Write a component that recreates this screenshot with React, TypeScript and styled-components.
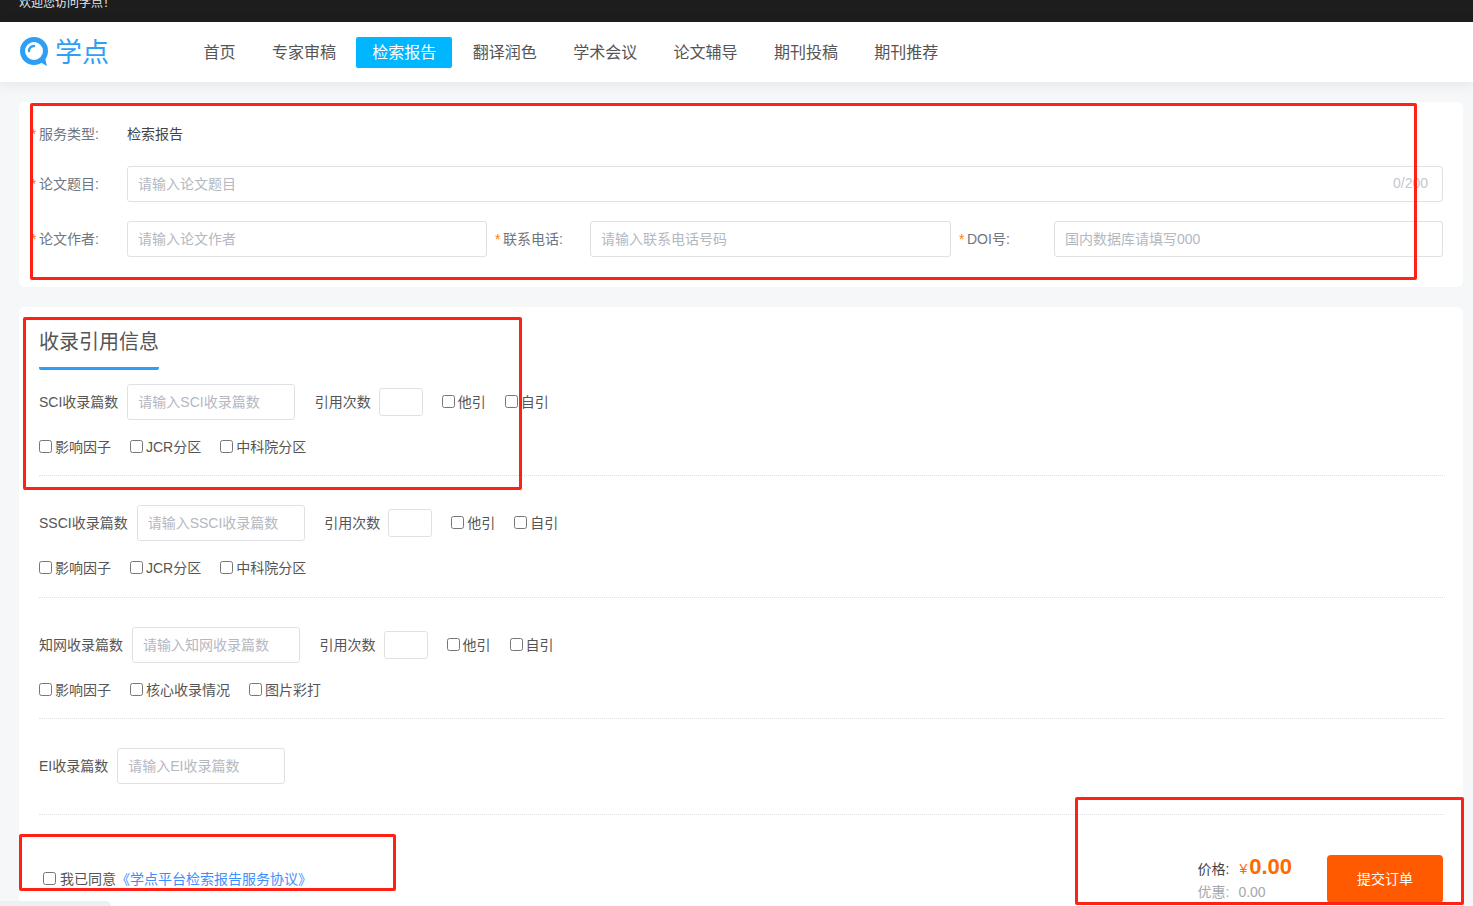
import React from 'react';
import styled, { createGlobalStyle } from 'styled-components';

const FONT = '"Liberation Sans", "Noto Sans CJK SC", sans-serif';

const GlobalStyle = createGlobalStyle`
  html, body {
    margin: 0;
    padding: 0;
    height: 906px;
    overflow: hidden;
    background: #f6f7f9;
    font-family: ${FONT};
    font-size: 14px;
    color: #555;
  }
  * { box-sizing: border-box; }
`;

const Page = styled.div`
  position: relative;
  width: 1473px;
  height: 906px;
  overflow: hidden;
`;

const TopBar = styled.div`
  height: 22px;
  background: #1d1d1d;
  color: #e8e8e8;
  font-size: 12px;
  line-height: 7px;
  padding-left: 19px;
  overflow: hidden;
`;

const Header = styled.header`
  position: relative;
  height: 60px;
  background: #fff;
  box-shadow: 0 2px 12px rgba(60, 70, 90, 0.1);
  display: flex;
  align-items: center;
  padding-left: 20px;
`;

const LogoBox = styled.div`
  width: 167.5px;
  display: flex;
  align-items: center;
  gap: 7px;
  color: #2f9ff5;
  font-size: 27px;
  line-height: 30px;
  span { padding-top: 2px; }
`;

const Nav = styled.nav`
  display: flex;
  gap: 4.4px;
`;

const NavItem = styled.a<{ $active?: boolean }>`
  height: 31px;
  line-height: 31px;
  padding: 0 16px;
  border-radius: 2px;
  font-size: 16px;
  color: ${p => (p.$active ? '#fff' : '#555')};
  background: ${p => (p.$active ? '#00b7ff' : 'transparent')};
`;

const Main = styled.main`
  padding: 20px 10px 0 19px;
  display: flex;
  flex-direction: column;
  gap: 20px;
`;

const Card = styled.section`
  background: #fff;
  border-radius: 6px;
`;

const ServiceCard = styled(Card)`
  padding: 20px 20px 30px 12px;
  display: flex;
  flex-direction: column;
  gap: 19px;
`;

const InfoRow = styled.div`
  display: grid;
  grid-template-columns: 96px 1fr;
  align-items: center;
  height: 25px;
  padding-bottom: 2px;
`;

const FieldRow = styled.div`
  display: grid;
  grid-template-columns: 96px 1fr;
  align-items: center;
`;

const AuthorRow = styled.div`
  display: grid;
  grid-template-columns: 88px 360px 87px 361px 87px 1fr;
  column-gap: 8px;
  align-items: center;
`;

const ReqLabel = styled.label`
  padding-bottom: 2px;
  color: #6f7680;
  white-space: nowrap;
  &::before {
    content: '*';
    display: inline-block;
    width: 8px;
    color: #ff7a1a;
    font-size: 14px;
  }
`;

const ServiceValue = styled.span`
  padding-bottom: 2px;
  color: #444;
`;

const InputWrap = styled.div`
  position: relative;
`;

const TextInput = styled.input<{ $width?: number }>`
  display: block;
  width: ${p => (p.$width ? `${p.$width}px` : '100%')};
  height: 36px;
  padding: 0 10px;
  border: 1px solid #dfe1e6;
  border-radius: 3px;
  outline: none;
  background: #fff;
  color: #555;
  font-family: ${FONT};
  font-size: 14px;
  &::placeholder { color: #b4b8bf; opacity: 1; }
`;

const Counter = styled.span`
  position: absolute;
  right: 15px;
  top: 9px;
  color: #c4c7cc;
`;

const QuoteCard = styled(Card)`
  padding: 0 18px 0 20px;
  height: 640px;
`;

const Title = styled.h2`
  display: inline-block;
  margin: 22px 0 14px;
  padding-bottom: 11px;
  border-bottom: 3px solid #2f9ff5;
  border-radius: 0 0 2px 2px;
  color: #555;
  font-size: 20px;
  font-weight: 400;
  line-height: 27px;
`;

const Block = styled.div<{ $first?: boolean; $bottom: number }>`
  padding-top: ${p => (p.$first ? 0 : 29)}px;
  padding-bottom: ${p => p.$bottom}px;
  border-bottom: 1px dotted #dcdfe4;
  display: flex;
  flex-direction: column;
  gap: 9px;
`;

const Line = styled.div`
  display: flex;
  align-items: center;
  gap: 19px;
  height: 36px;
  white-space: nowrap;
`;

const SourceField = styled.div`
  display: flex;
  align-items: center;
  gap: 9px;
  margin-right: 0.5px;
  span { padding-bottom: 2px; }
`;

const CountField = styled.div`
  display: flex;
  align-items: center;
  gap: 8px;
  span { padding-bottom: 2px; }
`;

const SmallInput = styled(TextInput)`
  width: 44px;
  height: 28px;
  padding: 0 4px;
`;

const Check = styled.label`
  display: inline-flex;
  align-items: center;
  gap: 3px;
  padding-bottom: 2px;
`;

const Box = styled.input.attrs({ type: 'checkbox' })`
  width: 13px;
  height: 13px;
  margin: 0;
`;

const Footer = styled.div`
  display: flex;
  align-items: center;
  justify-content: space-between;
  padding: 39px 2px 0 4px;
`;

const Agree = styled.label`
  display: flex;
  align-items: center;
  padding-bottom: 2px;
  ${Box} { margin-right: 4px; }
`;

const AgreeLink = styled.a`
  color: #3d8fff;
`;

const Checkout = styled.div`
  display: flex;
  align-items: center;
  gap: 35px;
`;

const PriceBlock = styled.div`
  display: flex;
  flex-direction: column;
  margin-bottom: 3px;
`;

const PriceLine = styled.div`
  display: flex;
  align-items: baseline;
  height: 29px;
  color: #444;
`;

const Yen = styled.span`
  margin: 0 2px 0 10px;
  color: #ff6a00;
`;

const Amount = styled.span`
  color: #ff6a00;
  font-size: 22px;
  font-weight: 700;
`;

const DiscountLine = styled.div`
  display: flex;
  gap: 9px;
  height: 18px;
  line-height: 18px;
  color: #a5a8ae;
`;

const SubmitButton = styled.button`
  width: 116px;
  height: 48px;
  padding: 0 0 2px;
  border: none;
  border-radius: 4px;
  background: #ff5a00;
  color: #fff;
  font-family: ${FONT};
  font-size: 14px;
`;

const Annotation = styled.div<{ $x: number; $y: number; $w: number; $h: number }>`
  position: absolute;
  left: ${p => p.$x}px;
  top: ${p => p.$y}px;
  width: ${p => p.$w}px;
  height: ${p => p.$h}px;
  border: 3px solid #ff2116;
  border-radius: 2px;
  pointer-events: none;
`;

const BottomTab = styled.div`
  position: absolute;
  left: 0;
  bottom: 0;
  width: 111px;
  height: 5px;
  background: #eeeff1;
  border-radius: 0 6px 0 0;
`;

const LogoMark = () => (
  <svg width="28" height="30" viewBox="0 0 28 30" fill="none">
    <circle cx="14" cy="14" r="11.5" stroke="#2f9ff5" strokeWidth="5" />
    <path d="M9 14a5 5 0 0 1 5-5" stroke="#2f9ff5" strokeWidth="2.4" strokeLinecap="round" />
    <path d="M18 24l7-3 2 8z" fill="#2f9ff5" />
  </svg>
);

const navItems = ['首页', '专家审稿', '检索报告', '翻译润色', '学术会议', '论文辅导', '期刊投稿', '期刊推荐'];

interface SourceProps {
  label: string;
  extras?: string[];
  noCount?: boolean;
  first?: boolean;
  bottom: number;
}

const Source: React.FC<SourceProps> = ({ label, extras, noCount, first, bottom }) => (
  <Block $first={first} $bottom={bottom}>
    <Line>
      <SourceField>
        <span>{label}收录篇数</span>
        <TextInput $width={168} placeholder={`请输入${label}收录篇数`} />
      </SourceField>
      {!noCount && (
        <>
          <CountField>
            <span>引用次数</span>
            <SmallInput />
          </CountField>
          <Check><Box />他引</Check>
          <Check><Box />自引</Check>
        </>
      )}
    </Line>
    {extras && (
      <Line>
        {extras.map(item => (
          <Check key={item}><Box />{item}</Check>
        ))}
      </Line>
    )}
  </Block>
);

export default function App() {
  return (
    <Page>
      <GlobalStyle />
      <TopBar>欢迎您访问学点！</TopBar>
      <Header>
        <LogoBox>
          <LogoMark />
          <span>学点</span>
        </LogoBox>
        <Nav>
          {navItems.map(item => (
            <NavItem key={item} $active={item === '检索报告'}>{item}</NavItem>
          ))}
        </Nav>
      </Header>

      <Main>
        <ServiceCard>
          <InfoRow>
            <ReqLabel>服务类型:</ReqLabel>
            <ServiceValue>检索报告</ServiceValue>
          </InfoRow>
          <FieldRow>
            <ReqLabel>论文题目:</ReqLabel>
            <InputWrap>
              <TextInput placeholder="请输入论文题目" />
              <Counter>0/200</Counter>
            </InputWrap>
          </FieldRow>
          <AuthorRow>
            <ReqLabel>论文作者:</ReqLabel>
            <TextInput placeholder="请输入论文作者" />
            <ReqLabel>联系电话:</ReqLabel>
            <TextInput placeholder="请输入联系电话号码" />
            <ReqLabel>DOI号:</ReqLabel>
            <TextInput placeholder="国内数据库请填写000" />
          </AuthorRow>
        </ServiceCard>

        <QuoteCard>
          <Title>收录引用信息</Title>
          <Source first bottom={10} label="SCI" extras={['影响因子', 'JCR分区', '中科院分区']} />
          <Source bottom={11} label="SSCI" extras={['影响因子', 'JCR分区', '中科院分区']} />
          <Source bottom={10} label="知网" extras={['影响因子', '核心收录情况', '图片彩打']} />
          <Source bottom={30} noCount label="EI" />
          <Footer>
            <Agree>
              <Box />
              <span>我已同意</span>
              <AgreeLink>《学点平台检索报告服务协议》</AgreeLink>
            </Agree>
            <Checkout>
              <PriceBlock>
                <PriceLine>
                  价格:<Yen>¥</Yen><Amount>0.00</Amount>
                </PriceLine>
                <DiscountLine>
                  <span>优惠:</span>
                  <span>0.00</span>
                </DiscountLine>
              </PriceBlock>
              <SubmitButton>提交订单</SubmitButton>
            </Checkout>
          </Footer>
        </QuoteCard>
      </Main>

      <Annotation $x={30} $y={103} $w={1387} $h={177} />
      <Annotation $x={23} $y={317} $w={499} $h={173} />
      <Annotation $x={19} $y={834} $w={377} $h={57} />
      <Annotation $x={1075} $y={797} $w={389} $h={108} />
      <BottomTab />
    </Page>
  );
}
